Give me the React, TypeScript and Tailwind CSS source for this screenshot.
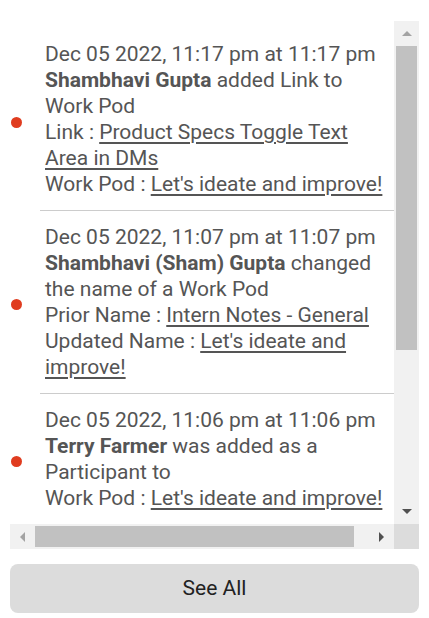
import React from 'react';

type Row = { label?: string; link?: string };

type Activity = {
  time: string;
  who: string;
  action: string;
  rows: Row[];
};

const activities: Activity[] = [
  {
    time: 'Dec 05 2022, 11:17 pm at 11:17 pm',
    who: 'Shambhavi Gupta',
    action: 'added Link to Work Pod',
    rows: [
      { label: 'Link', link: 'Product Specs Toggle Text Area in DMs' },
      { label: 'Work Pod', link: "Let's ideate and improve!" },
    ],
  },
  {
    time: 'Dec 05 2022, 11:07 pm at 11:07 pm',
    who: 'Shambhavi (Sham) Gupta',
    action: 'changed the name of a Work Pod',
    rows: [
      { label: 'Prior Name', link: 'Intern Notes - General' },
      { label: 'Updated Name', link: "Let's ideate and improve!" },
    ],
  },
  {
    time: 'Dec 05 2022, 11:06 pm at 11:06 pm',
    who: 'Terry Farmer',
    action: 'was added as a Participant to',
    rows: [{ label: 'Work Pod', link: "Let's ideate and improve!" }],
  },
  {
    time: 'Dec 05 2022, 11:02 pm at 11:02 pm',
    who: 'Shambhavi Gupta',
    action: 'created a Work Pod',
    rows: [{ label: 'Work Pod', link: 'Intern Notes - General' }],
  },
];

const Arrow: React.FC<{ dir: 'up' | 'down' | 'left' | 'right'; dim?: boolean }> = ({ dir, dim }) => {
  const pts = {
    up: '0,5 5,0 10,5',
    down: '0,0 10,0 5,5',
    left: '5,0 5,10 0,5',
    right: '0,0 0,10 5,5',
  }[dir];
  const vertical = dir === 'up' || dir === 'down';
  return (
    <svg width={vertical ? 10 : 5} height={vertical ? 5 : 10} viewBox={vertical ? '0 0 10 5' : '0 0 5 10'}>
      <polygon points={pts} fill={dim ? '#a3a3a3' : '#505050'} />
    </svg>
  );
};

const ActivityItem: React.FC<{ item: Activity; first?: boolean }> = ({ item, first }) => (
  <div className="flex">
    <div className="w-[30px] shrink-0 flex items-center justify-start pl-[1px] pt-[6px]">
      <span className="block w-[11px] h-[11px] rounded-full bg-[#e03c1f]" />
    </div>
    <div className={`flex-1 pl-[5px] pr-[26px] py-[13px] ${first ? '' : 'border-t border-[#cccccc]'}`}>
      <div>{item.time}</div>
      <div>
        <span className="font-bold">{item.who}</span> {item.action}
      </div>
      {item.rows.map((r, i) => (
        <div key={i}>
          {r.label} : <span className="underline decoration-2 underline-offset-[3px]">{r.link}</span>
        </div>
      ))}
    </div>
  </div>
);

export default function App() {
  return (
    <div className="w-[429px] h-[618px] bg-white pt-[21px] px-[10px] font-['Roboto',sans-serif]">
      <div className="w-[409px]">
        <div className="flex h-[503px]">
          <div className="w-[384px] h-[503px] overflow-hidden">
            <div className="w-[402px] pt-[7px] text-[21px] leading-[26px] text-[#555555]">
              {activities.map((a, i) => (
                <ActivityItem key={i} item={a} first={i === 0} />
              ))}
            </div>
          </div>
          <div className="w-[25px] bg-[#f1f1f1] flex flex-col">
            <div className="h-[25px] flex items-center justify-center">
              <Arrow dir="up" dim />
            </div>
            <div className="flex-1 flex flex-col px-[2px]">
              <div className="h-[304px] bg-[#c1c1c1]" />
            </div>
            <div className="h-[25px] flex items-center justify-center">
              <Arrow dir="down" />
            </div>
          </div>
        </div>
        <div className="flex h-[25px]">
          <div className="w-[384px] bg-[#f1f1f1] flex">
            <div className="w-[25px] flex items-center justify-center">
              <Arrow dir="left" dim />
            </div>
            <div className="flex-1 py-[2px] flex">
              <div className="w-[319px] bg-[#c1c1c1]" />
            </div>
            <div className="w-[25px] flex items-center justify-center">
              <Arrow dir="right" />
            </div>
          </div>
          <div className="w-[25px] bg-[#dcdcdc]" />
        </div>
      </div>
      <button className="mt-[15px] w-[409px] h-[49px] rounded-lg bg-[#dcdcdc] text-[21px] text-[#222222]">
        See All
      </button>
    </div>
  );
}
